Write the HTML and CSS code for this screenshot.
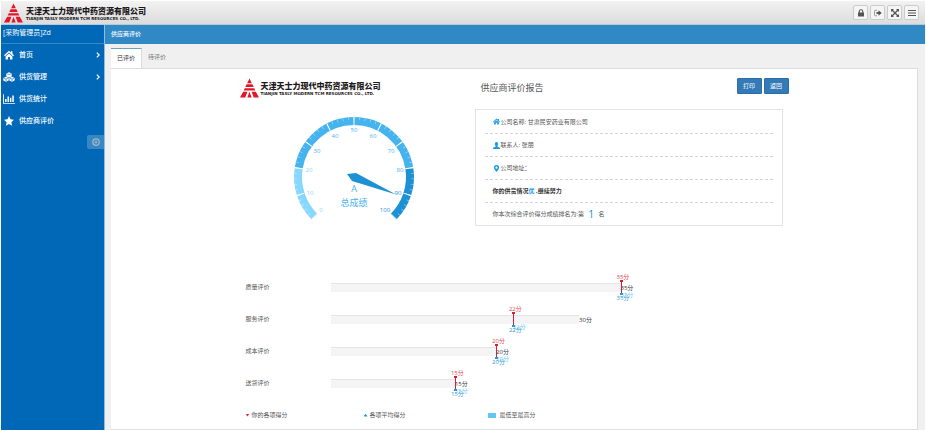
FILE: index.html
```html
<!DOCTYPE html>
<html lang="zh-CN">
<head>
<meta charset="utf-8">
<title>供应商评价</title>
<link rel="stylesheet" href="styles.css">
</head>
<body>
<svg class="defs" width="0" height="0" aria-hidden="true">
  <symbol id="mark" viewBox="0 0 36 36">
    <path d="M18 0 L22.500 9 H13.500Z M12.500 11 H23.500 L26 16 H10Z M9 18.500 H27 L29 22.500 H7Z" fill="#e2172a"/>
    <path d="M6 25 H14 L10 36 H0Z M22 25 H30 L36 36 H26Z M18 25 L22 36 H14Z" fill="#e2172a"/>
  </symbol>
  <symbol id="home" viewBox="0 0 16 16"><path d="M8 1 L0 8.500 L1.500 10 L8 4 L14.500 10 L16 8.500 L13.500 6 V2 H11 V3.800Z M8 5.500 L2.500 10.500 V15 H6.500 V11 H9.500 V15 H13.500 V10.500Z"/></symbol>
</svg>
<header class="topbar">
  <div class="brand">
    <svg class="brand-mark" aria-hidden="true"><use href="#mark"/></svg>
    <div class="brand-text"><span class="brand-cn">天津天士力现代中药资源有限公司</span><span class="brand-en">TIANJIN TASLY MODERN TCM RESOURCES CO., LTD.</span></div>
  </div>
  <div class="tools">
    <button type="button" aria-label="锁定"><svg viewBox="0 0 16 16"><path d="M2 7 H14 V15 H2Z"/><path d="M4.500 8 V5 A3.500 3.500 0 0 1 11.500 5 V8" fill="none" stroke="#555" stroke-width="2.200"/></svg></button>
    <button type="button" aria-label="退出"><svg viewBox="0 0 16 16"><path d="M6 2.500 H3 Q1 2.500 1 4.500 V11.500 Q1 13.500 3 13.500 H6" fill="none" stroke="#777" stroke-width="1.500"/><path d="M5 6 H9 V2.500 L15.500 8 L9 13.500 V10 H5Z"/></svg></button>
    <button type="button" aria-label="全屏"><svg viewBox="0 0 16 16"><path d="M0 0 H6 L0 6Z M16 0 V6 L10 0Z M0 16 V10 L6 16Z M16 16 H10 L16 10Z"/><path d="M2 2 L14 14 M14 2 L2 14" stroke="#555" stroke-width="2.500"/></svg></button>
    <button type="button" aria-label="菜单"><svg viewBox="0 0 16 16"><path d="M0 2 H16 V4 H0Z M0 7 H16 V9 H0Z M0 12 H16 V14 H0Z"/></svg></button>
  </div>
</header>
<div class="shell">
  <aside class="sidebar">
    <p class="user">[采购管理员]Zd</p>
    <nav class="menu">
      <a href="#"><svg viewBox="0 0 16 16"><use href="#home"/></svg><span>首页</span><svg class="chevron" viewBox="0 0 6 10"><path d="M1 1 L5 5 L1 9"/></svg></a>
      <a href="#"><svg viewBox="0 0 20 16"><path d="M10 0 L14.500 2 V7 L10 9 L5.500 7 V2Z"/><path d="M5 7.500 L9.500 9.500 V14 L5 16 L0.500 14 V9.500Z M15 7.500 L19.500 9.500 V14 L15 16 L10.500 14 V9.500Z"/><path d="M6.500 2.500 L10 4 L13.500 2.500 M1.500 10 L5 11.500 L8.500 10 M5 11.500 V15 M11.500 10 L15 11.500 L18.500 10 M15 11.500 V15" fill="none" stroke="#0068b7" stroke-width="1"/></svg><span>供货管理</span><svg class="chevron" viewBox="0 0 6 10"><path d="M1 1 L5 5 L1 9"/></svg></a>
      <a href="#"><svg viewBox="0 0 20 16"><path d="M0 0 H1.500 V14.500 H20 V16 H0Z M3.500 8 H6 V13 H3.500Z M7.500 4 H10 V13 H7.500Z M11.500 6 H14 V13 H11.500Z M15.500 2 H18 V13 H15.500Z"/></svg><span>供货统计</span></a>
      <a href="#"><svg viewBox="0 0 16 16"><path d="M8 0 L10.400 5.300 L16 6 L11.800 9.900 L13 15.600 L8 12.800 L3 15.600 L4.200 9.900 L0 6 L5.600 5.300Z"/></svg><span>供应商评价</span></a>
    </nav>
    <button class="collapse" type="button" aria-label="收起菜单"><svg viewBox="0 0 16 16"><circle cx="8" cy="8" r="6.500" fill="none" stroke="#a9b3bd" stroke-width="2.500"/><path d="M8 4.500 V11.500 M4.500 8 H11.500" stroke="#a9b3bd" stroke-width="2"/></svg></button>
  </aside>
  <main class="content">
    <h1 class="crumb">供应商评价</h1>
    <div class="tabs"><a class="tab active" href="#">已评价</a><a class="tab" href="#">待评价</a></div>
    <section class="panel">
      <div class="report">
        <div class="summary">
          <div class="overview">
            <div class="brand">
              <svg class="brand-mark" aria-hidden="true"><use href="#mark"/></svg>
              <div class="brand-text"><span class="brand-cn">天津天士力现代中药资源有限公司</span><span class="brand-en">TIANJIN TASLY MODERN TCM RESOURCES CO., LTD.</span></div>
            </div>
            <svg class="gauge" viewBox="-65 -65 130 110" role="img" aria-label="总成绩 A">
              <g fill="none" stroke-width="8">
                <path d="M-39.600 39.600 A56 56 0 0 1 -55.300 -8.800" stroke="#87d8ff"/>
                <path d="M-55.300 -8.800 A56 56 0 0 1 55.300 -8.800" stroke="#45b3ee"/>
                <path d="M55.300 -8.800 A56 56 0 0 1 39.600 39.600" stroke="#1e90d4"/>
                <path d="M-39.600 39.600 A56 56 0 1 1 39.600 39.600" pathLength="1000" stroke="#fff" stroke-dasharray="4 96" stroke-dashoffset="2"/>
                <path d="M-41.400 41.400 A58.500 58.500 0 1 1 41.400 41.400" pathLength="1000" stroke="#fff" stroke-width="3" stroke-dasharray="2 18" stroke-dashoffset="1" opacity=".6"/>
              </g>
              <g class="scale">
                <text class="low" x="-33" y="35">0</text><text class="low" x="-44" y="18">10</text><text class="low" x="-45" y="-5">20</text>
                <text x="-37" y="-24">30</text><text x="-19" y="-39">40</text><text x="0" y="-45">50</text><text x="19" y="-39">60</text><text x="37" y="-24">70</text>
                <text x="46" y="-5">80</text><text class="high" x="44" y="18">90</text><text class="high" x="31" y="35">100</text>
              </g>
              <path d="M-7 -3 L2 -4 L42 17.500 L-2 4Z" fill="#1e90d4"/>
              <text class="grade" x="0" y="15">A</text>
              <text class="grade" x="0" y="29">总成绩</text>
            </svg>
          </div>
          <div class="details">
            <div class="title-row">
              <h2>供应商评价报告</h2>
              <div class="actions"><button type="button">打印</button><button type="button">返回</button></div>
            </div>
            <ul class="info">
              <li><svg viewBox="0 0 16 16"><use href="#home"/></svg>公司名称: 甘肃民安药业有限公司</li>
              <li><svg viewBox="0 0 16 16"><path d="M8 0 C13 0 12 7 10 9 V10.500 L16 13 V16 H0 V13 L6 10.500 V9 C4 7 3 0 8 0Z"/></svg>联系人: 张朋</li>
              <li><svg viewBox="0 0 16 16"><path fill-rule="evenodd" d="M8 0 A6 6 0 0 1 14 6 Q14 9 8 16 Q2 9 2 6 A6 6 0 0 1 8 0Z M8 3.500 A2.500 2.500 0 1 0 8 8.500 A2.500 2.500 0 1 0 8 3.500Z"/></svg>公司地址：</li>
              <li><strong>你的供货情况<em>优</em> ,继续努力</strong></li>
              <li>你本次综合评价得分成绩排名为:第<b class="rank">1</b>名</li>
            </ul>
          </div>
        </div>
        <div class="scores">
          <div class="score"><span>质量评价</span><div class="track"><div class="bar" style="width:100%"><span class="full">35分</span></div><div class="marker" style="left:100%"><span class="mine">35分</span><span class="range">35分</span><span class="average">35分</span></div></div></div>
          <div class="score"><span>服务评价</span><div class="track"><div class="bar" style="width:85.7%"><span class="full">30分</span></div><div class="marker" style="left:62.9%"><span class="mine">22分</span><span class="range">22分</span><span class="average">22分</span></div></div></div>
          <div class="score"><span>成本评价</span><div class="track"><div class="bar" style="width:57.1%"><span class="full">20分</span></div><div class="marker" style="left:57.1%"><span class="mine">20分</span><span class="range">20分</span><span class="average">20分</span></div></div></div>
          <div class="score"><span>送货评价</span><div class="track"><div class="bar" style="width:42.9%"><span class="full">15分</span></div><div class="marker" style="left:42.9%"><span class="mine">15分</span><span class="range">15分</span><span class="average">15分</span></div></div></div>
        </div>
        <div class="legend"><span><i class="down"></i>你的各项得分</span><span><i class="up"></i>各项平均得分</span><span><i class="block"></i>最低至最高分</span></div>
      </div>
    </section>
  </main>
</div>
</body>
</html>
```
FILE: styles.css
```css
* { box-sizing: border-box; }
body {
  margin: 0;
  padding: 1px 1px 0;
  min-height: 100vh;
  display: flex;
  flex-direction: column;
  font: 6px/10px "Open Sans", "Noto Sans CJK SC", sans-serif;
  color: #555;
  background: #fff;
}
h1, h2, p, ul { margin: 0; padding: 0; }
button { padding: 0; font: inherit; }
a { color: inherit; text-decoration: none; }
.defs { position: absolute; }

.topbar {
  display: flex;
  justify-content: space-between;
  align-items: center;
  height: 24px;
  padding: 0 6px 0 3px;
  background: linear-gradient(#f2f2f2, #dcdcdc);
  border-bottom: 1px solid #b9c9d5;
}
.brand { display: flex; align-items: center; gap: 3px; }
.brand-mark { width: 19px; height: 20px; }
.brand-text { display: flex; flex-direction: column; white-space: nowrap; color: #1c1718; }
.brand-cn { font-size: 8px; line-height: 11px; font-weight: 900; }
.brand-en { font: 700 4px/5px "DejaVu Sans", sans-serif; }
.tools { display: flex; gap: 2px; }
.tools button {
  display: grid;
  place-items: center;
  width: 15px;
  height: 15px;
  background: #f5f5f5;
  border: 1px solid #ccc;
  border-radius: 2px;
}
.tools svg { width: 8px; height: 8px; fill: #555; }

.shell { flex: 1; display: flex; padding-bottom: 1px; }
.sidebar {
  width: 104px;
  flex: none;
  background: #0068b7;
  border-right: 1px solid #8fbde0;
  color: #fff;
  font-size: 7px;
}
.user { height: 19px; padding: 3px 2px; border-bottom: 1px solid #3388c5; }
.menu a {
  display: grid;
  grid-template-columns: 12px 1fr 4px;
  align-items: center;
  gap: 4px;
  height: 22px;
  padding: 0 4px 0 2px;
  font-weight: 500;
}
.menu svg { width: 12px; height: 10px; fill: #fff; }
.menu .chevron { width: 4px; height: 6px; fill: none; stroke: #fff; stroke-width: 2; }
.collapse {
  display: grid;
  place-items: center;
  width: 17px;
  height: 14px;
  margin: 3px 0 0 auto;
  background: #3388c5;
  border: 0;
  border-radius: 2px 0 0 2px;
}
.collapse svg { width: 8px; height: 8px; }

.content { flex: 1; min-width: 0; display: flex; flex-direction: column; background: #f0f0f0; }
.crumb {
  height: 19px;
  padding: 0 6px;
  font-size: 6px;
  line-height: 19px;
  font-weight: 500;
  color: #fff;
  background: #3088c5;
}
.tabs { display: flex; padding: 4px 6px 0; }
.tab { height: 20px; padding: 0 6px; line-height: 19px; color: #777; }
.tab.active { margin-bottom: -1px; line-height: 18px; color: #333; background: #fff; border-top: 1px solid #6fa3bd; border-right: 1px solid #ddd; }
.panel {
  flex: 1;
  margin: 0 7px 0 6px;
  background: #fff;
  border: 1px solid #ddd;
  border-left: 0;
}
.report { max-width: 549px; margin: 0 auto; padding-top: 9px; }
.summary { display: grid; grid-template-columns: 235px 1fr; }
.overview .brand { gap: 2px; }
.gauge { display: block; width: 130px; height: 110px; margin: 14px 0 0 49px; }
.gauge text { text-anchor: middle; font-size: 6px; fill: #45b3ee; }
.gauge .low { fill: #87d8ff; }
.gauge .high { fill: #1e90d4; }
.gauge .grade { font-size: 9px; }

.title-row { display: flex; justify-content: space-between; padding-left: 6px; }
.title-row h2 { font-size: 9px; line-height: 20px; font-weight: 400; }
.actions { display: flex; gap: 2px; }
.actions button {
  width: 25px;
  height: 16px;
  color: #fff;
  background: #337ab7;
  border: 1px solid #2a6da8;
  border-radius: 1px;
}
.info {
  margin: 11px 6px 0 0;
  padding: 0 9px;
  list-style: none;
  border: 1px solid #e3e3e3;
}
.info li { display: flex; align-items: center; height: 23px; padding-left: 8px; white-space: pre; }
.info li + li { border-top: 1px dashed #d4d4d4; }
.info svg { width: 7px; height: 7px; margin-right: 1px; fill: #1c9ce0; }
.info strong { color: #333; }
.info em { font-style: normal; color: #1c9ce0; }
.info .rank { margin: 0 4px; font-size: 11px; font-weight: 400; color: #1c9ce0; }

.scores { padding: 45px 0 0 6px; }
.score { display: grid; grid-template-columns: 85px 290px; align-items: center; height: 32px; }
.track { position: relative; height: 9px; white-space: nowrap; }
.bar { position: relative; height: 9px; background: #f4f4f4; border-top: 1px solid #e4e4e4; }
.full { position: absolute; left: 100%; top: -1px; color: #333; }
.marker { position: absolute; top: -2px; width: 1px; height: 13px; background: #d81e3c; }
.marker::before, .marker::after { content: ""; position: absolute; left: -1px; width: 3px; height: 2px; }
.marker::before { top: -1px; background: #d81e3c; }
.marker::after { bottom: -1px; background: #1c9ce0; }
.marker span { position: absolute; }
.mine { left: -4px; top: -9px; color: #e8454b; }
.range { left: 0; top: 9px; color: #6cc8f8; }
.average { left: -4px; top: 12px; color: #3d94cf; }

.legend { display: grid; grid-template-columns: 118px 124px 1fr; padding: 11px 6px 9px; }
.legend span { display: flex; align-items: center; gap: 2px; }
.legend i { width: 4px; height: 3px; }
.down { background: #d81e3c; clip-path: polygon(0 0, 100% 0, 50% 100%); }
.up { background: #1c9ce0; clip-path: polygon(50% 0, 100% 100%, 0 100%); }
.legend .block { width: 8px; height: 5px; margin-right: 2px; background: #63c5fa; }
```
